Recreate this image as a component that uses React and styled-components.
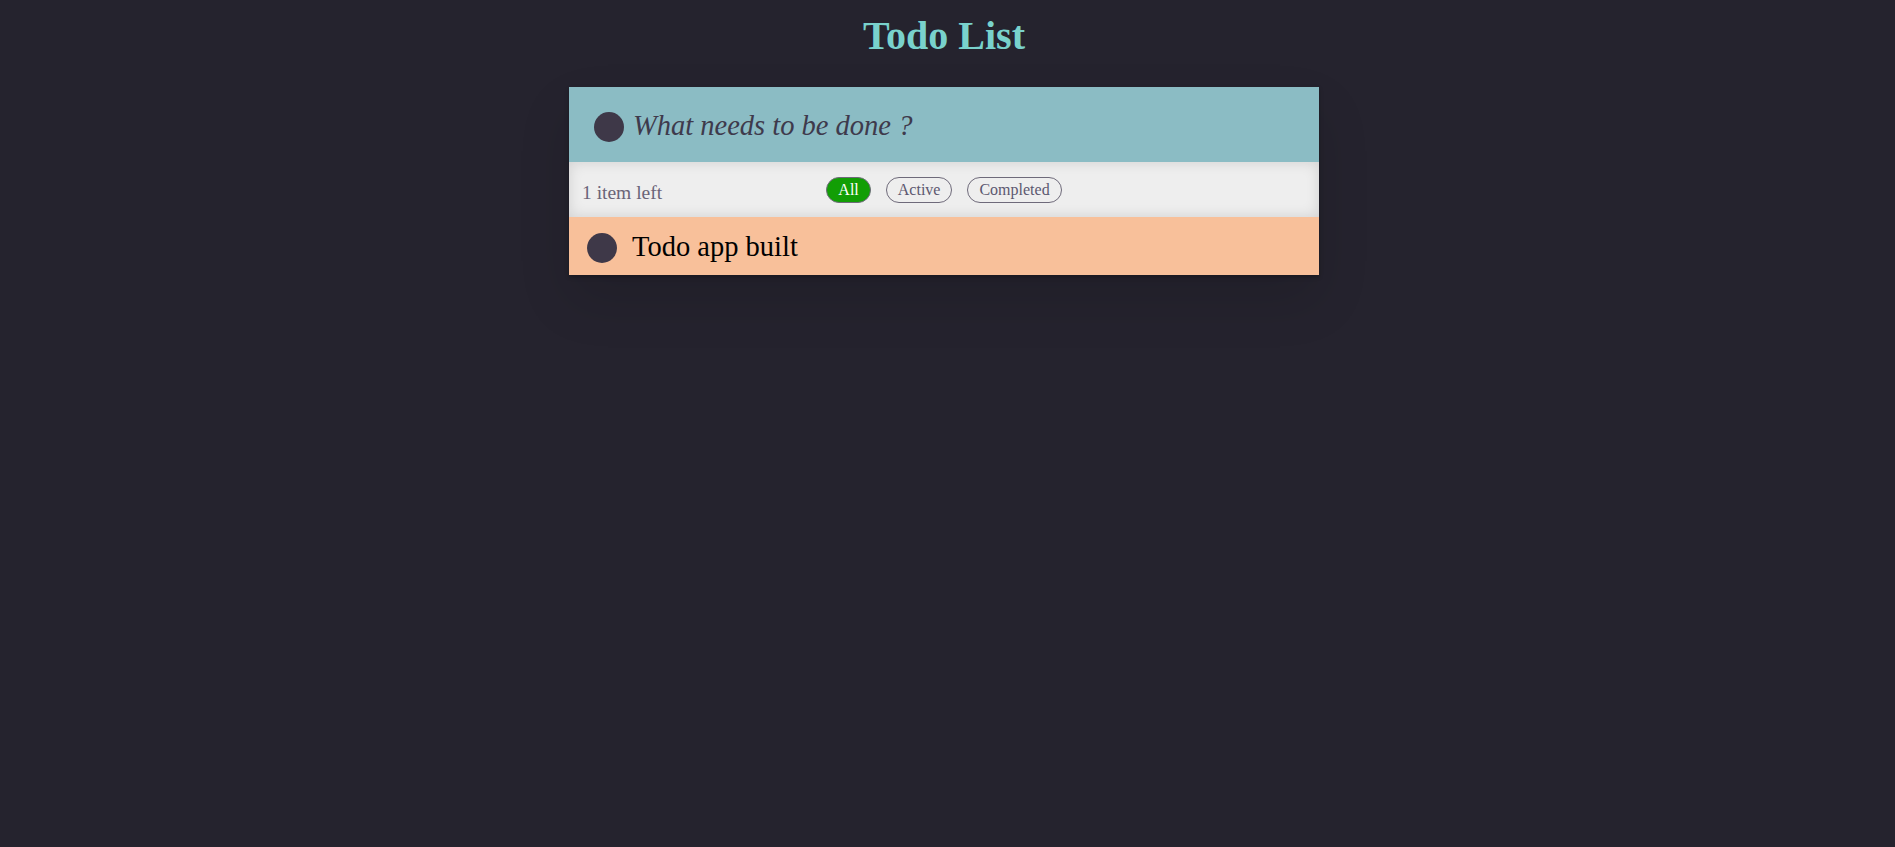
import React, { useState } from 'react';
import styled, { createGlobalStyle } from 'styled-components';

const GlobalStyle = createGlobalStyle`
  html, body {
    margin: 0;
    padding: 0;
    background: #25232e;
    font-family: "Liberation Serif", "Times New Roman", serif;
  }
`;

const Page = styled.div`
  min-height: 847px;
  padding-right: 7px;
  display: flex;
  flex-direction: column;
  align-items: center;
`;

const Title = styled.h1`
  margin: 14px 0 29px;
  font-size: 40px;
  font-weight: bold;
  line-height: 44px;
  color: #79d2cc;
  text-align: center;
`;

const Card = styled.section`
  width: 750px;
  display: flex;
  flex-direction: column;
  box-shadow: 0 2px 4px rgba(0, 0, 0, 0.25), 0 25px 50px rgba(0, 0, 0, 0.12);
`;

const NewTodo = styled.form`
  height: 75px;
  box-sizing: border-box;
  padding: 5px 0 0 25px;
  display: flex;
  align-items: center;
  gap: 9px;
  background: #8bbcc4;
`;

const Dot = styled.span`
  flex: none;
  width: 30px;
  height: 30px;
  border-radius: 50%;
  background: #3e3848;
`;

const Input = styled.input`
  flex: 1;
  border: none;
  outline: none;
  background: transparent;
  padding: 0;
  margin-top: -3px;
  font-family: "Liberation Serif", "Times New Roman", serif;
  font-size: 28.5px;
  font-style: italic;
  color: #3e3a4c;
  caret-color: #111;

  &::placeholder {
    color: #3e3a4c;
    opacity: 1;
  }
`;

const Footer = styled.div`
  height: 55px;
  box-sizing: border-box;
  padding: 0 13px;
  display: grid;
  grid-template-columns: 1fr auto 1fr;
  align-items: center;
  background: #eeeeee;
  box-shadow: inset 0 0 14px rgba(0, 0, 0, 0.13);
`;

const Count = styled.span`
  font-size: 19.5px;
  color: #6a6478;
  padding-top: 6px;
`;

const Filters = styled.div`
  display: flex;
  gap: 15px;
`;

const Filter = styled.button`
  height: 26px;
  padding: 0 11px;
  border-radius: 13px;
  border: 1px solid #6e6a7a;
  background: ${(p) => (p.$active ? '#129e05' : 'transparent')};
  color: ${(p) => (p.$active ? '#ffffff' : '#5c5870')};
  font-family: "Liberation Serif", "Times New Roman", serif;
  font-size: 16px;
  line-height: 24px;
  cursor: pointer;
`;

const Row = styled.div`
  height: 58px;
  box-sizing: border-box;
  padding: 4px 0 0 18px;
  display: flex;
  align-items: center;
  gap: 15px;
  background: #f8c09a;
`;

const RowText = styled.span`
  font-size: 28.5px;
  color: #000;
  margin-top: -2px;
`;

const filters = ['All', 'Active', 'Completed'];

export default function App() {
  const [text, setText] = useState('');
  const [filter, setFilter] = useState('All');
  const todos = [{ id: 1, text: 'Todo app built', done: false }];
  const left = todos.filter((t) => !t.done).length;

  return (
    <Page>
      <GlobalStyle />
      <Title>Todo List</Title>
      <Card>
        <NewTodo onSubmit={(e) => e.preventDefault()}>
          <Dot />
          <Input
            autoFocus
            placeholder="What needs to be done ?"
            value={text}
            onChange={(e) => setText(e.target.value)}
          />
        </NewTodo>
        <Footer>
          <Count>{left} item left</Count>
          <Filters>
            {filters.map((f) => (
              <Filter key={f} $active={f === filter} onClick={() => setFilter(f)}>
                {f}
              </Filter>
            ))}
          </Filters>
          <span />
        </Footer>
        {todos.map((t) => (
          <Row key={t.id}>
            <Dot />
            <RowText>{t.text}</RowText>
          </Row>
        ))}
      </Card>
    </Page>
  );
}
